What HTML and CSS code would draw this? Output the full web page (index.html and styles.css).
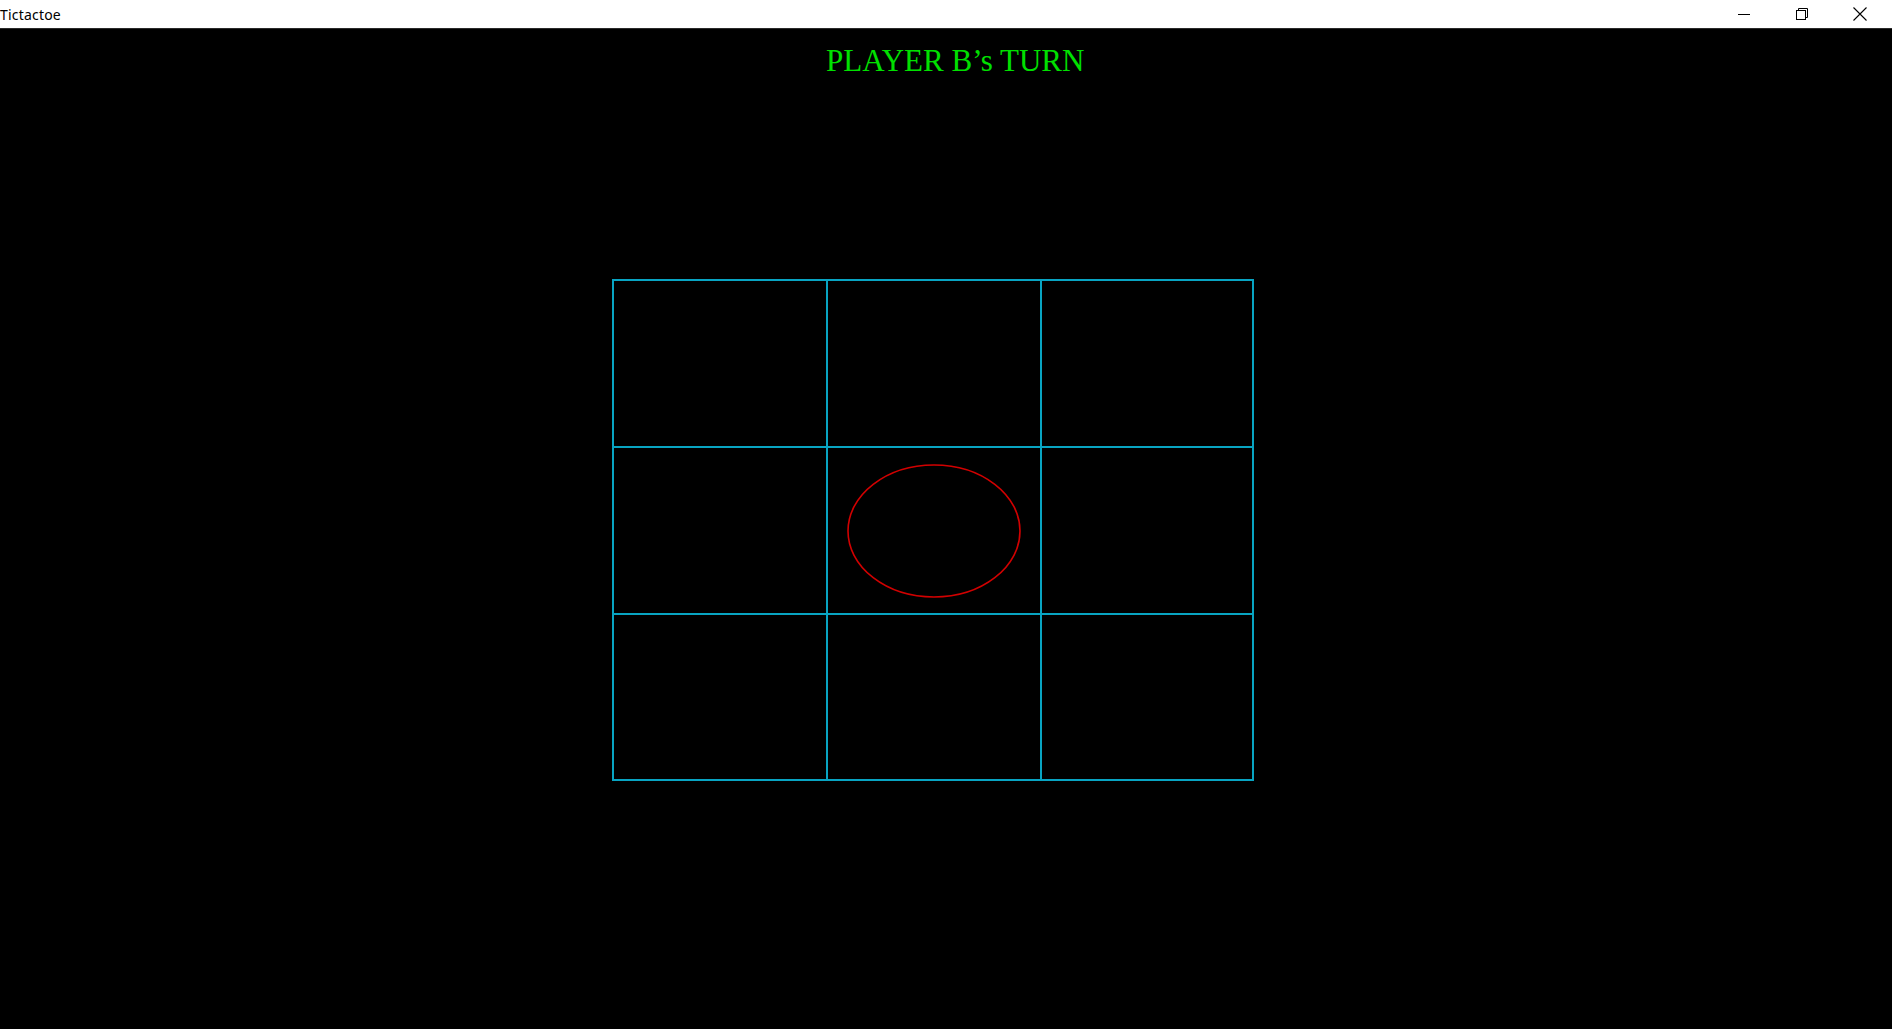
FILE: index.html
```html
<!DOCTYPE html>
<html>
<head>
<meta charset="utf-8">
<title>Tictactoe</title>
<link rel="stylesheet" href="styles.css">
</head>
<body>
<div class="window">
  <div class="titlebar">
    <span class="title">Tictactoe</span>
    <div class="controls">
      <span class="ctl">
        <svg width="12" height="12" viewBox="0 0 12 12"><line x1="0" y1="6.5" x2="12" y2="6.5" stroke="#000" stroke-width="1"/></svg>
      </span>
      <span class="ctl">
        <svg width="12" height="12" viewBox="0 0 12 12" fill="none" stroke="#000" stroke-width="1"><rect x="0.5" y="2.5" width="9" height="9"/><path d="M2.5 2.5 V0.5 H11.5 V9.5 H9.5"/></svg>
      </span>
      <span class="ctl">
        <svg width="14" height="14" viewBox="0 0 14 14" fill="none" stroke="#000" stroke-width="1.1"><path d="M0.5 0.5 L13.5 13.5 M13.5 0.5 L0.5 13.5"/></svg>
      </span>
    </div>
  </div>
  <div class="canvas">
    <div class="heading">PLAYER B’s TURN</div>
    <div class="board-wrap">
      <div class="board">
        <div class="cell"></div>
        <div class="cell"></div>
        <div class="cell"></div>
        <div class="cell"></div>
        <div class="cell">
          <svg class="oh" width="174" height="134" viewBox="0 0 174 134"><ellipse cx="87" cy="67" rx="86" ry="66" fill="none" stroke="#d20000" stroke-width="1.6"/></svg>
        </div>
        <div class="cell"></div>
        <div class="cell"></div>
        <div class="cell"></div>
        <div class="cell"></div>
      </div>
    </div>
  </div>
</div>
</body>
</html>
```

FILE: styles.css
```css
html, body {
  margin: 0;
  padding: 0;
  height: 100%;
  background: #000;
}
.window {
  display: flex;
  flex-direction: column;
  height: 1029px;
  width: 1892px;
}
.titlebar {
  height: 28px;
  background: #fff;
  border-bottom: 1px solid #2a2a2a;
  display: flex;
  align-items: center;
  justify-content: space-between;
  flex-shrink: 0;
}
.title {
  font-family: "Noto Sans", "Open Sans", sans-serif;
  font-size: 14px;
  letter-spacing: 0.2px;
  color: #000;
  margin-top: 0;
}
.controls {
  display: flex;
  height: 100%;
  align-items: center;
  padding-right: 3px;
}
.ctl {
  display: flex;
  align-items: center;
  justify-content: center;
  width: 58px;
  height: 100%;
}
.ctl svg { display: block; }
.canvas {
  flex: 1;
  background: #000;
  display: flex;
  flex-direction: column;
}
.heading {
  font-family: "Liberation Serif", "Times New Roman", serif;
  font-size: 31px;
  line-height: 30px;
  color: #00e000;
  padding-top: 17px;
  padding-left: 826px;
  white-space: nowrap;
}
.board-wrap {
  padding-left: 612px;
  padding-top: 203px;
}
.board {
  display: grid;
  grid-template-columns: 212px 212px 210px;
  grid-template-rows: 165px 165px 164px;
  gap: 2px;
  padding: 2px;
  background: #08a4c2;
  width: max-content;
}
.cell {
  background: #000;
  display: flex;
  align-items: center;
  justify-content: center;
}
.oh { display: block; }
```
